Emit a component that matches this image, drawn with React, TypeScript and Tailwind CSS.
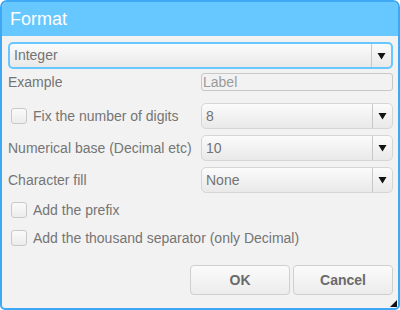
import React from 'react';

const font = { fontFamily: '"Liberation Sans", Arial, sans-serif' };

interface ISelectProps {
  value: string;
  focused?: boolean;
  className?: string;
}

const Select = ({ value, focused = false, className = '' }: ISelectProps) => {
  const border = focused ? 'border-2 border-[#66c8ff]' : 'border border-[#d6d6d6]';
  return (
    <div
      className={`flex items-stretch rounded-[5px] bg-gradient-to-b from-[#fbfbfb] to-[#e9e9e9] ${border} ${className}`}
    >
      <div className="flex flex-1 items-center pl-[4px] text-[14px] text-[#737373]">{value}</div>
      <div className="flex w-[20px] items-center justify-center border-l border-[#c8c8c8]">
        <svg width="9" height="8" viewBox="0 0 9 8">
          <path d="M0.5 1 L8.5 1 L4.5 7.5 Z" fill="#111" />
        </svg>
      </div>
    </div>
  );
};

const Checkbox = () => (
  <div className="h-[16px] w-[16px] shrink-0 rounded-[3px] border border-[#c9c9c9] bg-gradient-to-b from-[#fafafa] to-[#ececec]" />
);

export default function App() {
  return (
    <div className="h-[310px] w-[400px] bg-white" style={font}>
      <div className="flex h-full flex-col overflow-hidden rounded-t-[7px] rounded-b-[5px] border-2 border-[#3ea8f4] bg-[#f2f2f2]">
        <div className="flex h-[34px] items-center bg-[#66c8ff] pl-[8px] text-[18px] text-white">Format</div>

        <div className="relative flex flex-1 flex-col pl-[6px] pr-[5px] text-[14px] text-[#757575]">
          <Select value="Integer" focused className="mt-[6px] h-[27px]" />

          <div className="mt-[4px] flex h-[18px] items-center">
            <span className="w-[193px]">Example</span>
            <div className="flex h-[18px] flex-1 items-center rounded-[3px] border border-[#c8c8c8] pl-[1px] text-[#9a9a9a]">
              Label
            </div>
          </div>

          <div className="mt-[12px] flex h-[26px] items-center">
            <div className="flex w-[193px] items-center gap-[6px] pl-[3px]">
              <Checkbox />
              <span>Fix the number of digits</span>
            </div>
            <Select value="8" className="h-[26px] flex-1" />
          </div>

          <div className="mt-[6px] flex h-[26px] items-center">
            <span className="w-[193px]">Numerical base (Decimal etc)</span>
            <Select value="10" className="h-[26px] flex-1" />
          </div>

          <div className="mt-[6px] flex h-[26px] items-center">
            <span className="w-[193px]">Character fill</span>
            <Select value="None" className="h-[26px] flex-1" />
          </div>

          <div className="mt-[5px] flex h-[24px] items-center gap-[6px] pl-[3px]">
            <Checkbox />
            <span>Add the prefix</span>
          </div>

          <div className="mt-[4px] flex h-[24px] items-center gap-[6px] pl-[3px]">
            <Checkbox />
            <span>Add the thousand separator (only Decimal)</span>
          </div>

          <div className="mt-[15px] flex justify-end gap-[3px]">
            <button className="h-[30px] w-[100px] rounded-[4px] border border-[#cfcfcf] bg-gradient-to-b from-[#fbfbfb] to-[#ececec] text-[14px] font-bold text-[#6a6a6a]">
              OK
            </button>
            <button className="h-[30px] w-[100px] rounded-[4px] border border-[#cfcfcf] bg-gradient-to-b from-[#fbfbfb] to-[#ececec] text-[14px] font-bold text-[#6a6a6a]">
              Cancel
            </button>
          </div>

          <svg className="absolute bottom-[1px] right-[1px]" width="7" height="7" viewBox="0 0 7 7">
            <path d="M7 0 L7 7 L0 7 Z" fill="#111" />
          </svg>
        </div>
      </div>
    </div>
  );
}
